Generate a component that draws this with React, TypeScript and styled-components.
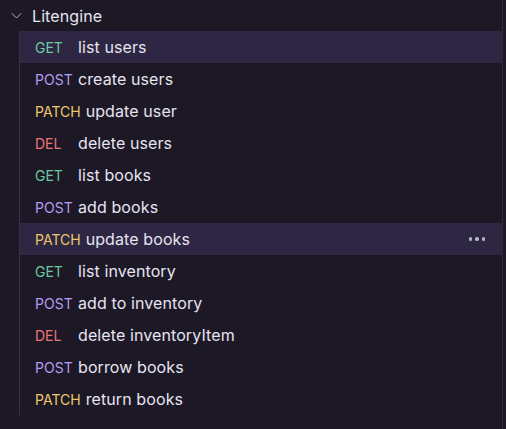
import React from 'react';
import styled, { createGlobalStyle } from 'styled-components';

type Method = 'GET' | 'POST' | 'PATCH' | 'DEL';

const requests: { method: Method; name: string; active?: boolean; hovered?: boolean }[] = [
  { method: 'GET', name: 'list users', active: true },
  { method: 'POST', name: 'create users' },
  { method: 'PATCH', name: 'update user' },
  { method: 'DEL', name: 'delete users' },
  { method: 'GET', name: 'list books' },
  { method: 'POST', name: 'add books' },
  { method: 'PATCH', name: 'update books', hovered: true },
  { method: 'GET', name: 'list inventory' },
  { method: 'POST', name: 'add to inventory' },
  { method: 'DEL', name: 'delete inventoryItem' },
  { method: 'POST', name: 'borrow books' },
  { method: 'PATCH', name: 'return books' },
];

const methodColors: Record<Method, string> = {
  GET: '#6dc9a2',
  POST: '#b59cf2',
  PATCH: '#ecc96c',
  DEL: '#e87474',
};

const GlobalStyle = createGlobalStyle`
  html, body {
    margin: 0;
    padding: 0;
    background: #1c1826;
  }
  body {
    font-family: Inter, "Noto Sans", sans-serif;
    -webkit-font-smoothing: antialiased;
  }
`;

const Panel = styled.div`
  width: 503px;
  height: 429px;
  box-sizing: border-box;
  border-right: 1px solid #2f2a3d;
  background: #1c1826;
  color: #e7e4f0;
`;

const Folder = styled.div`
  display: flex;
  align-items: center;
  height: 31px;
  padding-left: 9px;
  gap: 8px;
  font-size: 16px;
  letter-spacing: 0.1px;
`;

const Chevron = styled.svg`
  width: 15px;
  height: 15px;
  color: #b7b3c4;
`;

const Children = styled.div`
  margin-left: 19px;
  border-left: 1px solid #37324a;
`;

const Row = styled.div<{ $active?: boolean }>`
  display: flex;
  align-items: center;
  height: 32px;
  padding-left: 15px;
  padding-right: 17px;
  background: ${(p) => (p.$active ? '#2d2743' : 'transparent')};
  font-size: 16px;
  letter-spacing: 0.1px;
`;

const Badge = styled.span<{ $method: Method }>`
  min-width: 38px;
  margin-right: 5px;
  font-size: 14px;
  font-weight: 400;
  letter-spacing: 0;
  color: ${(p) => methodColors[p.$method]};
`;

const Name = styled.span`
  flex: 1;
  white-space: nowrap;
`;

const More = styled.span`
  display: flex;
  gap: 3px;
  span {
    width: 3.5px;
    height: 3.5px;
    border-radius: 50%;
    background: #b9b4cc;
  }
`;

export default function App() {
  return (
    <>
      <GlobalStyle />
      <Panel>
        <Folder>
          <Chevron viewBox="0 0 24 24" fill="none" stroke="currentColor" strokeWidth={1.6} strokeLinecap="round" strokeLinejoin="round">
            <path d="M5 9l7 7 7-7" />
          </Chevron>
          Litengine
        </Folder>
        <Children>
          {requests.map((r) => (
            <Row key={r.name} $active={r.active || r.hovered}>
              <Badge $method={r.method}>{r.method}</Badge>
              <Name>{r.name}</Name>
              {r.hovered && (
                <More>
                  <span />
                  <span />
                  <span />
                </More>
              )}
            </Row>
          ))}
        </Children>
      </Panel>
    </>
  );
}
